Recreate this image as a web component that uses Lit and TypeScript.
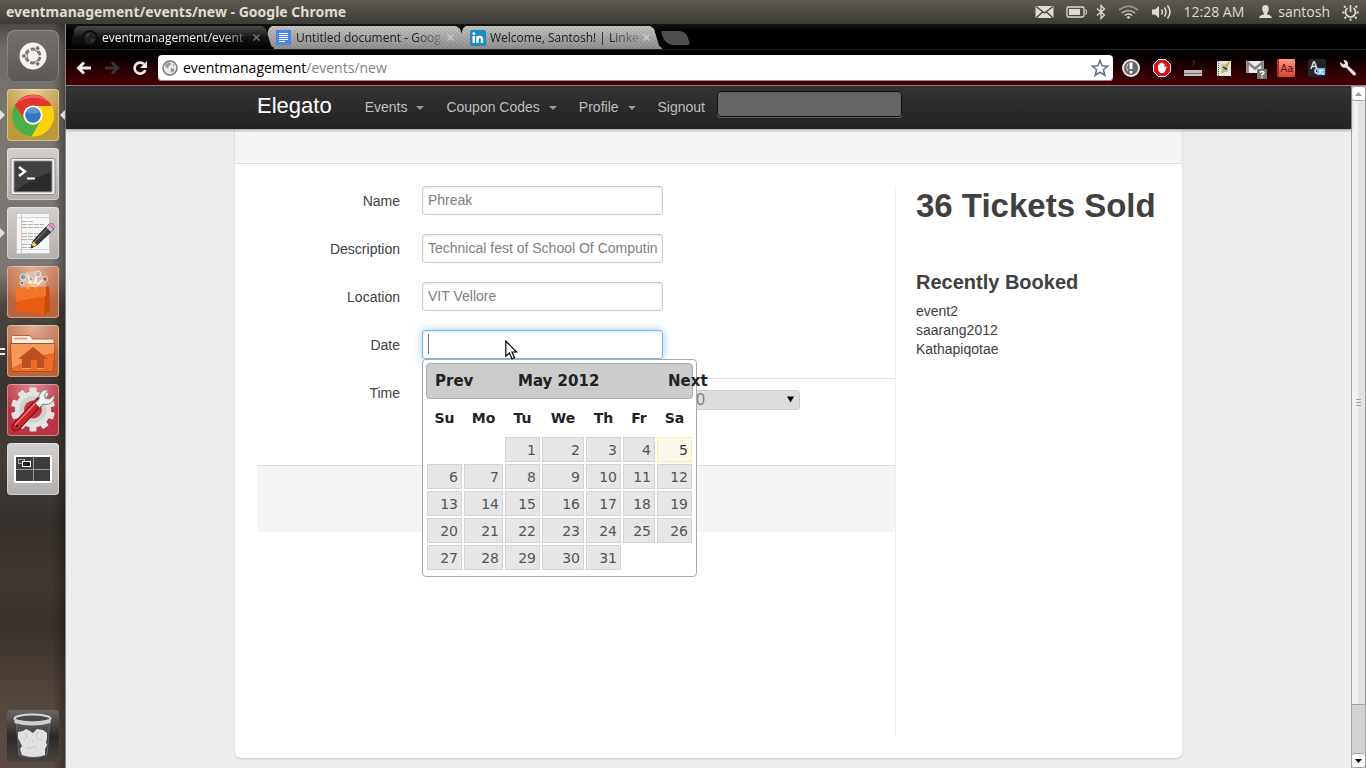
import { LitElement, html, css, svg, nothing } from "lit";
import { customElement } from "lit/decorators.js";
import { classMap } from "lit/directives/class-map.js";

/* ---------- Desktop launcher ---------- */

const ubuntuIcon = svg`
  <circle cx="26" cy="26" r="13.5" fill="#f4f3f2"/>
  <circle cx="26" cy="26" r="7" fill="none" stroke="#7b7672" stroke-width="3" stroke-dasharray="12.7 2" stroke-dashoffset="-1"/>
  <g fill="#7b7672" stroke="#f4f3f2"><circle cx="17" cy="26" r="2.4"/><circle cx="30.6" cy="18.2" r="2.4"/><circle cx="30.6" cy="33.8" r="2.4"/></g>`;

const chromeIcon = svg`
  <circle cx="26" cy="26.500" r="21" fill="#fbd30b"/>
  <path d="M7.800 16A21 21 0 0 0 24.500 47.500L33.500 32A9.500 9.500 0 0 1 17.500 30.500z" fill="#4cb04a"/>
  <path d="M7.800 16.200A21 21 0 0 1 44.700 17L26 17A9.500 9.500 0 0 0 17 30z" fill="#e3342f"/>
  <path d="M10 14A21 21 0 0 1 42 13Q26 4 10 14z" fill="#fff" opacity=".25"/>
  <circle cx="26" cy="26" r="9.500" fill="#fff"/><circle cx="26" cy="26" r="7.800" fill="#3279be"/>
  <path d="M19 23a7.800 7.800 0 0 1 14 0q-7 3-14 0z" fill="#fff" opacity=".22"/>`;

const terminalIcon = svg`
  <rect x="4" y="10.500" width="44" height="36" rx="1.500" fill="#f2f2f2" stroke="#8b8b8b"/>
  <rect x="7" y="13" width="38" height="31" fill="#2b2b2b" stroke="#9a9a9a"/>
  <path d="M8 14h36v10Q24 31 8 43z" fill="#fff" opacity=".1"/>
  <path d="M12 19l6 4.500-6 4.500" fill="none" stroke="#fff" stroke-width="2.400"/>
  <path d="M20 30.500h8" stroke="#fff" stroke-width="2"/>`;

const editorIcon = svg`
  <rect x="9.500" y="6.500" width="33" height="40" fill="#f7f7f5" stroke="#c9c7c5"/>
  <path d="M14.500 7v39" stroke="#e9b5b5"/><path d="M10 10.500h32M10 42.500h32" stroke="#c8d6ea"/>
  <path d="M15 14.500h12M15 17.500h22M15 20.500h20M15 26.500h21M15 29.500h15M15 32.500h17M15 37.500h9M15 40.500h12" stroke="#b4b4b4" stroke-dasharray="5 1"/>
  <path d="M24 41l2-7L42 17l5 5-17 16z" fill="#3c3c3c" stroke="#1d1d1d"/>
  <path d="M27.500 35L43.500 18.500" stroke="#888"/>
  <path d="M24 41l2-7 4 4z" fill="#e8cf6b"/><path d="M24 41l.8-2.800 1.800 1.800z" fill="#111"/>
  <path d="M39 20l2.500-2.500 5 5L44 25z" fill="#c8c8c8"/><path d="M41.500 17.500q2-2 4-.8t2 3.500l-1.500 2z" fill="#e890c5" stroke="#9b5583" stroke-width=".6"/>`;

const bagIcon = svg`
  <circle cx="26" cy="18" r="13" fill="#fff" opacity=".3"/>
  <path d="M26 21L12 11l10 6L19 5l7 12L31 4l-1 13 11-8-9 10z" fill="#fff2dc" opacity=".85"/>
  <g stroke="#fff" stroke-width=".7"><circle cx="16" cy="11" r="3" fill="#7f9db5"/><circle cx="31" cy="8" r="3" fill="#b9bcb9"/><circle cx="38" cy="13" r="2.500" fill="#9c6b5b"/><circle cx="24" cy="13" r="2" fill="#91a7b7"/><circle cx="15" cy="17" r="1.800" fill="#aa5b43"/></g>
  <path d="M9 22l33-1.500 1 24-6 4L10 45z" fill="#e95d12"/><path d="M39 21l3-.5 1 24-6 4z" fill="#c64b0b"/>
  <path d="M9 22l30-1.200V30Q24 32 9.300 36z" fill="#ff8a3d" opacity=".5"/>
  <path d="M21 23v-4.500h8V22.500" fill="none" stroke="#ffb25b" stroke-width="1.600"/>`;

const homeIcon = svg`
  <path d="M4.500 45V11.500q0-1 1-1H22q1 0 1.700 1L25.500 14H47v31z" fill="#f4f2f0" stroke="#b9643a"/>
  <rect x="7" y="12.500" width="13" height="2" fill="#ef9b6f"/>
  <path d="M3.500 18.500h44.500l-1.500 28H4.500z" fill="#ee6c26" stroke="#c24a12"/>
  <path d="M4 19h43.500l-.5 9Q28 30 5 43z" fill="#ffc58c" opacity=".5"/>
  <path d="M26 22L11 34h4v10h9v-9h6v9h7V34h4z" fill="#b9511f"/><path d="M15 43.500h9M30 43.500h7" stroke="#f8a36b"/>`;

const gearTeeth = Array.from({ length: 10 }, (_, i) =>
  svg`<rect x="22.500" y="3.500" width="7" height="9" rx="1" transform="rotate(${i * 36} 26 25.500)"/>`);
const settingsIcon = svg`
  <g fill="#e3e3e1">${gearTeeth}<circle cx="26" cy="25.500" r="18"/></g>
  <circle cx="26" cy="25.500" r="13.500" fill="#d0d0ce"/><circle cx="26" cy="25.500" r="9" fill="#bd3a45"/>
  <path d="M9 43L33 17" stroke="#7d0e12" stroke-width="9" stroke-linecap="round"/>
  <path d="M9 43L31 19" stroke="#cc2229" stroke-width="7" stroke-linecap="round"/>
  <path d="M8.500 40.500L29 18.500" stroke="#f0787a" stroke-width="1.500" stroke-linecap="round"/>
  <path d="M28 19l4.500 4.500 3.500-3.500q6 1.500 9.500-2.500 2.500-3 1.500-6.500L42.500 15l-4-.5-1-4 4-4.500q-4-1-7 1.500-3.500 3.500-2.500 8z" fill="#f0f0ee" stroke="#77837f"/>
  <circle cx="10" cy="42" r="1.200" fill="#5b0a0d"/>`;

const workspaceIcon = svg`
  <rect x="8" y="13" width="36" height="26" rx="1" fill="#3d3d3d" stroke="#fff" stroke-width="2"/>
  <path d="M26.500 14v24M9 26.500h34" stroke="#9b9b9b"/>
  <rect x="11.500" y="16.500" width="6" height="4" fill="none" stroke="#a9a9a9"/>
  <rect x="15.500" y="18.500" width="8" height="5" fill="#222" stroke="#fff"/>`;

const trashIcon = svg`
  <path d="M9 11l3 34q14 5 28 0l3-34z" fill="#777" opacity=".35" stroke="#b8b8b8"/>
  <path d="M11 22l5-1 3-2 4 2 3 2 4-4 6 1 4 3v5l-1 4 1 3-2 4v6q-11 4-23 0l-2-6 2-3-2-4-2-4z" fill="#dfe2de"/>
  <path d="M19 23l1 4-3 3M31 22l-2 5 3 3 3-1M19 37l4 2 4-3 4 4M26 30v3" fill="none" stroke="#c2c6c0"/>
  <ellipse cx="25.500" cy="8.500" rx="18" ry="4" fill="#4a4a48" stroke="#d8d8d6" stroke-width="2"/>
  <path d="M7.500 9q18 6 36 0v4q-18 5-36 0z" fill="#cfcfcc"/>`;

const launcher = [
  { label: "Dash", kind: "dash", icon: ubuntuIcon, run: "" },
  { label: "Chrome", kind: "gold", icon: chromeIcon, run: "active" },
  { label: "Terminal", kind: "silver", icon: terminalIcon, run: "" },
  { label: "Editor", kind: "silver", icon: editorIcon, run: "open" },
  { label: "Software", kind: "rust", icon: bagIcon, run: "" },
  { label: "Home", kind: "rust", icon: homeIcon, run: "two" },
  { label: "Settings", kind: "red", icon: settingsIcon, run: "" },
  { label: "Workspaces", kind: "silver", icon: workspaceIcon, run: "" },
];

@customElement("desk-launcher")
class DeskLauncher extends LitElement {
  static styles = css`
    :host {
      display: flex; flex-direction: column; gap: 7px; width: 66px; box-sizing: border-box;
      padding: 6px 6px 6px 7px; border-right: 1px solid #8c8884;
      background: linear-gradient(90deg, transparent 52px, rgba(20, 14, 10, .4)),
        linear-gradient(#4c4845 0, #6f6a66 22px, #7c7672 90px, #7d7773 250px, #4c4641 280px, #3b3531 360px, #443d38 440px, #352f2b 500px, #40372f 560px, #383029 600px, #55483f 680px, #5a4c44);
    }
    .tile {
      position: relative; width: 52px; height: 52px; padding: 0; border: 0; border-radius: 4px;
      box-shadow: inset 0 0 0 1px rgba(255, 255, 255, .35);
    }
    .tile svg { display: block; }
    .dash { background: linear-gradient(#74706d, #5b5754); box-shadow: inset 0 0 0 1px rgba(255, 255, 255, .2); border-radius: 8px; }
    .gold { background: radial-gradient(circle at 50% 0, #e5cf9e, #bd983f 60%); }
    .silver { background: linear-gradient(#d3d1d0, #b1afae); }
    .rust { background: radial-gradient(circle at 50% 0, #e2b196, #b96540 70%); }
    .red { background: radial-gradient(circle at 50% 0, #dd8a8e, #b83643 60%); }
    .bin { margin-top: auto; background: linear-gradient(#6a6765, #2b2827 50%, #474341); box-shadow: none; }
    .run { position: absolute; top: 21px; left: -7px; width: 5px; height: 10px; background: #e3e1df; clip-path: polygon(0 0, 100% 50%, 0 100%); }
    .now { position: absolute; top: 21px; right: -6px; width: 5px; height: 10px; background: #e3e1df; clip-path: polygon(100% 0, 0 50%, 100% 100%); }
    .two .run { top: 23px; height: 7px; border: solid #f0eeec; border-width: 2px 0; box-sizing: border-box; background: none; clip-path: none; }
  `;
  render() {
    return html`${launcher.map((t) => html`
      <button class=${classMap({ tile: true, [t.kind]: true, two: t.run === "two" })} aria-label=${t.label}>
        <svg width="52" height="52" viewBox="0 0 52 52">${t.icon}</svg>
        ${t.run ? html`<span class="run"></span>` : nothing}
        ${t.run === "active" ? html`<span class="now"></span>` : nothing}
      </button>`)}
      <button class="tile bin" aria-label="Trash"><svg width="52" height="52" viewBox="0 0 52 52">${trashIcon}</svg></button>`;
  }
}

/* ---------- Desktop top panel ---------- */

@customElement("desk-panel")
class DeskPanel extends LitElement {
  static styles = css`
    :host {
      display: flex; align-items: center; justify-content: space-between; height: 24px; padding: 0 7px 0 6px;
      background: linear-gradient(#5c5a50, #3d3b36); color: #dfdbd2;
      font: 14px/24px "Open Sans", "Noto Sans", sans-serif;
    }
    .title { font-weight: 700; font-family: "Noto Sans", "Open Sans", sans-serif; white-space: nowrap; }
    .tray { display: flex; align-items: center; gap: 12px; white-space: nowrap; }
    .tray svg { display: block; }
    .battery { margin-right: -3px; }
    .clock { margin-right: 3px; }
    .user { display: flex; align-items: center; gap: 6px; }
  `;
  render() {
    return html`
      <span class="title">eventmanagement/events/new - Google Chrome</span>
      <div class="tray">
        <svg width="19" height="14" viewBox="0 0 19 14"><rect x=".5" y="1" width="18" height="12" fill="#dfdbd2"/><path d="M1 1.500l8.500 6.500L18 1.500M1 13l6.500-6M18 13l-6.500-6" fill="none" stroke="#45433d" stroke-width="1.300"/></svg>
        <svg class="battery" width="21" height="12" viewBox="0 0 21 12"><rect x="1" y="1" width="17" height="10" rx="1.500" fill="none" stroke="#dfdbd2" stroke-width="1.300"/><rect x="3" y="3" width="11" height="6" fill="#dfdbd2"/><path d="M19 4h1.300v4H19" fill="none" stroke="#dfdbd2"/></svg>
        <svg width="10" height="16" viewBox="0 0 10 16"><path d="M1 4.500l7.500 6.500L5 14.500v-13L8.500 5 1 11.500" fill="none" stroke="#dfdbd2" stroke-width="1.300"/></svg>
        <svg width="21" height="14" viewBox="0 0 21 14"><g fill="none" stroke="#dfdbd2" stroke-width="1.600"><path d="M1 5q9.500-7.500 19 0" opacity=".5"/><path d="M4 8q6.500-5 13 0" opacity=".75"/><path d="M6.800 10.500q3.700-3 7.400 0"/></g><path d="M8.500 12q2-1.500 4 0l-2 2z" fill="#dfdbd2"/></svg>
        <svg width="21" height="16" viewBox="0 0 21 16"><path d="M1 5.500h3l4-3.500v12l-4-3.500H1z" fill="#dfdbd2"/><path d="M10.500 5.500q1.800 2.500 0 5M13.500 3.500q3 4.500 0 9M16.500 1.500q5 6.500 0 13" fill="none" stroke="#dfdbd2" stroke-width="1.500"/></svg>
        <span class="clock">12:28 AM</span>
        <span class="user">
          <svg width="13" height="14" viewBox="0 0 13 14"><path d="M6.500 0q3.300 0 3.300 4 0 2.500-1.600 4.200v1.300q4.800 1 4.800 3.500H0q0-2.500 4.800-3.500V8.200Q3.200 6.500 3.200 4q0-4 3.300-4z" fill="#dfdbd2"/></svg>
          <span>santosh</span>
        </span>
        <svg width="17" height="17" viewBox="0 0 17 17"><g fill="none" stroke="#dfdbd2"><path d="M5.500 4a5 5 0 1 0 6 0" stroke-width="1.700"/><path d="M8.500 1v7" stroke-width="1.700"/><path d="M3.500 3.500L2 2M13.500 3.500L15 2M2.500 8.500H.3M14.500 8.500h2.200M4 13l-1.500 1.500M13 13l1.500 1.500M8.500 14.500v2.200" stroke-width="1.800"/></g></svg>
      </div>`;
  }
}

/* ---------- Browser tabs and toolbar ---------- */

const globe = (dark: boolean) => svg`
  <circle cx="8" cy="8" r="7" fill=${dark ? "#1d1d1d" : "#e9e9e9"} stroke=${dark ? "#080808" : "#747474"} stroke-width="1.400"/>
  <path d="M3 5q2-3 5-2.500l1 2-2 1.500-1 2L4 7.500zM9 8l3 .5.500 2L10 13l-1.500-2zM11 3.500l2 2-1.500 1z" fill=${dark ? "#333" : "#9a9a9a"}/>`;

const tabs = [
  { text: "eventmanagement/event", active: true, icon: globe(true) },
  { text: "Untitled document - Goog", active: false,
    icon: svg`<rect width="15" height="15" fill="#4a86e8"/><path d="M3 3.500h9M3 5.500h9M3 7.500h9M3 9.500h9M3 11.500h6" stroke="#fff"/>` },
  { text: "Welcome, Santosh! | Linke", active: false,
    icon: svg`<rect width="16" height="16" rx="2" fill="#1a8dc2"/><rect x="2.500" y="6" width="2.500" height="7" fill="#fff"/><circle cx="3.800" cy="3.700" r="1.400" fill="#fff"/><path d="M7.500 13V6M7.500 9.500q0-2.500 2.500-2.500 2 0 2 2.500V13" fill="none" stroke="#fff" stroke-width="2.400"/>` },
];

const extensions = [
  { label: "Notifier", art: svg`<circle cx="9" cy="9" r="8" fill="#686868" stroke="#e6e6e6" stroke-width="2"/><path d="M9 3.500V10" stroke="#fff" stroke-width="3"/><circle cx="9" cy="13" r="1.500" fill="#fff"/><path d="M6 4.500q-3 4 0 8" fill="none" stroke="#ddd"/>` },
  { label: "AdBlock", art: svg`<path d="M5.500.5h7l5 5v7l-5 5h-7l-5-5v-7z" fill="#dc1212" stroke="#fff"/><path d="M5 9V6q.8-1 1.500 0V4.500q.9-1 1.700 0V4q.9-1 1.700 0v1q.9-1 1.600 0v4l1-1.500q1-.5 1.200.5L12 12.500 10.500 14h-3L5.500 12z" fill="#fff"/>` },
  { label: "Page rank", art: svg`<path d="M7.500 2.500q1.500-1.500 3 0 .5 1.500-1.500 2.500V6M9 7.500V8" fill="none" stroke="#3d3030"/><rect y="11" width="18" height="3.500" fill="#bdbdbd"/><path d="M0 16h18" stroke="#fff" stroke-width="1.500"/>` },
  { label: "Notes", art: svg`<rect x="2" y="2" width="14" height="15" fill="#e4e4dc"/><path d="M3.500 2v15" stroke="#555" stroke-dasharray="1 1"/><rect x="6" y="5" width="7" height="8" fill="#b9cbbd"/><path d="M7 14l3-4 4-7" stroke="#e9a21e" stroke-width="2" fill="none"/><path d="M8 8l4 2.500" stroke="#1d4a7a" stroke-width="2"/>` },
  { label: "Mail checker", art: svg`<rect x="0" y="2" width="18" height="12" fill="#ececec"/><path d="M1.500 14V3.500L9 9.500l7.500-6V14" fill="none" stroke="#858585" stroke-width="2.600"/><rect x="11" y="10" width="10" height="10" rx="1" fill="#777"/><path d="M14 13.500q2-2 4 0 0 1.500-2 2v1M16 17.500v1.200" fill="none" stroke="#fff" stroke-width="1.400"/>` },
  { label: "Dictionary", art: null },
  { label: "Translate", art: svg`<rect width="18" height="18" rx="3" fill="#20262b"/><path d="M3 10l2.500-7h1L9 10M4 7.500h4M10 9.500q-3 0-3 2.500t3 2.500" fill="none" stroke="#ddd" stroke-width="1.500"/><rect x="9" y="9" width="8" height="7" fill="#7db7f1"/><path d="M10.500 11.500h5M13 10v1.500q0 2.500-2.500 3.500M12 12.500q1.200 2 3.500 2.500" fill="none" stroke="#fff"/>` },
  { label: "Wrench", art: svg`<path d="M1 3l3.500 2.500L6 4.500 4.500 1Q8 .8 9 4q.3 1.500-.3 2.500l7.800 7q1 1.500 0 2.500t-2.500 0l-7-7.500q-1.500.5-3 0Q.8 6.500 1 3z" fill="#e9e7e6"/>` },
];

@customElement("browser-bar")
class BrowserBar extends LitElement {
  static styles = css`
    :host {
      display: block; border-bottom: 1px solid #8f8585; color: #eee;
      background: linear-gradient(#141414, #000 8px, #000 30px, #1a0000 40px, #4a0006);
      font: 12px/24px "Open Sans", "Noto Sans", sans-serif;
    }
    button { border: 0; padding: 0; background: none; color: inherit; font: inherit; }
    svg { display: block; flex: none; overflow: visible; }
    .tabs { display: flex; align-items: flex-end; height: 26px; padding-top: 2px; border-bottom: 1px solid #262626; box-sizing: border-box; }
    .tab {
      position: relative; display: flex; align-items: center; gap: 4px; width: 208px; height: 23px; box-sizing: border-box;
      margin-right: -14px; padding: 0 14px 0 16px;
      clip-path: polygon(0 100%, 4px 80%, 9px 10%, 12px 0, 196px 0, 200px 12%, 205px 85%, 209px 100%);
      background: repeating-conic-gradient(rgba(0, 0, 0, .06) 0 25%, transparent 0 50%) 0 0 / 4px 4px, linear-gradient(#c4c4c2, #8f8f8d);
      color: #1c1c1c;
    }
    .tab:nth-child(1) { z-index: 3; }
    .tab:nth-child(2) { z-index: 2; }
    .tab:nth-child(3) { z-index: 1; }
    .tab.active { background: linear-gradient(#4a4a4a, #151515 50%, #000); color: #f2f2f2; }
    .name { flex: 1; white-space: nowrap; text-align: left; mask-image: linear-gradient(90deg, #000 80%, rgba(0, 0, 0, .2)); }
    .plus { width: 25px; height: 14px; margin: 0 0 4px 15px; background: #4e4e4e; border-radius: 2px 6px 3px 8px; transform: skewX(18deg); }
    .tools { display: flex; align-items: center; gap: 14px; height: 35px; padding: 0 9px 0 10px; }
    .nav { display: flex; gap: 12px; }
    .omni { flex: 1; display: flex; align-items: center; gap: 5px; height: 26px; margin-left: -4px; padding: 0 4px; box-sizing: border-box; border-radius: 4px; background: #fff; box-shadow: inset 0 -1px #9b8a8a; }
    .url { flex: 1; min-width: 0; font-size: 14px; color: #000; white-space: nowrap; outline: 0; }
    .path { color: #808080; }
    .exts { display: flex; gap: 13px; margin-left: -5px; }
    .aa { width: 18px; height: 18px; box-sizing: border-box; border-left: 2px solid #b5281c; border-radius: 1px; background: linear-gradient(#ff9a86, #d8402f); font: 10px/20px "DejaVu Sans", sans-serif; color: #531008; }
  `;
  render() {
    return html`
      <div class="tabs">
        ${tabs.map((t) => html`
          <button class=${classMap({ tab: true, active: t.active })}>
            <svg width="16" height="16" viewBox="0 0 16 16">${t.icon}</svg>
            <span class="name">${t.text}</span>
            <svg width="7" height="7" viewBox="0 0 7 7"><path d="M.5.5l6 6M6.500.5l-6 6" stroke=${t.active ? "#777" : "#ccc"} stroke-width="1.400"/></svg>
          </button>`)}
        <button class="plus" aria-label="New tab"></button>
      </div>
      <div class="tools">
        <div class="nav">
          <button aria-label="Back"><svg width="16" height="16" viewBox="0 0 16 16"><path d="M15 8H3M8 2.500L2.500 8 8 13.500" fill="none" stroke="#eee" stroke-width="3"/></svg></button>
          <button aria-label="Forward"><svg width="16" height="16" viewBox="0 0 16 16"><path d="M1 8h12M8 2.500L13.500 8 8 13.500" fill="none" stroke="#3b3333" stroke-width="3"/></svg></button>
          <button aria-label="Reload"><svg width="16" height="16" viewBox="0 0 16 16"><path d="M12 4.200A5.500 5.500 0 1 0 13.300 10" fill="none" stroke="#eee" stroke-width="2.600"/><path d="M15 1v7H8z" fill="#eee"/></svg></button>
        </div>
        <div class="omni">
          <svg width="16" height="16" viewBox="0 0 16 16">${globe(false)}</svg>
          <div class="url" role="textbox" contenteditable="true" aria-label="Address">eventmanagement<span class="path">/events/new</span></div>
          <button aria-label="Bookmark"><svg width="18" height="18" viewBox="0 0 18 18"><path d="M9 1.500l2.100 5.200 5.600.4-4.300 3.600 1.400 5.500L9 13.200l-4.800 3 1.400-5.500L1.300 7.100l5.600-.4z" fill="#fff" stroke="#65718c" stroke-width="1.600"/></svg></button>
        </div>
        <div class="exts">
          ${extensions.map((e) => html`<button aria-label=${e.label}>${e.art
            ? html`<svg width="18" height="18" viewBox="0 0 18 18">${e.art}</svg>`
            : html`<div class="aa">Aa</div>`}</button>`)}
        </div>
      </div>`;
  }
}

/* ---------- Site navigation ---------- */

@customElement("site-nav")
class SiteNav extends LitElement {
  static styles = css`
    :host { display: block; position: relative; z-index: 1; background: linear-gradient(#333, #222); box-shadow: 0 1px 3px rgba(0, 0, 0, .4); font: 14px/43px "Liberation Sans", Arial, sans-serif; }
    .bar { display: flex; align-items: center; height: 43px; max-width: 947px; margin: 0 auto; padding-left: 22px; box-sizing: border-box; }
    a { color: #bfbfbf; text-decoration: none; white-space: nowrap; }
    .brand { margin-right: 33px; padding-bottom: 3px; font-size: 22px; line-height: 40px; color: #fff; }
    .item { display: flex; align-items: center; gap: 9px; margin-right: 22px; }
    .caret { border: 4px solid transparent; border-top-color: #999; border-bottom: 0; }
    .out { margin-right: 12px; }
    .find { width: 185px; height: 26px; margin-bottom: 8px; box-sizing: border-box; border: 1px solid #111; border-radius: 4px; background: #666; box-shadow: inset 0 1px 2px rgba(0, 0, 0, .1), 0 1px rgba(255, 255, 255, .25); color: #fff; }
  `;
  render() {
    return html`<nav class="bar">
      <a class="brand" href="#">Elegato</a>
      ${["Events", "Coupon Codes", "Profile"].map((n) => html`<a class="item" href="#">${n}<span class="caret"></span></a>`)}
      <a class="out" href="#">Signout</a>
      <input class="find" type="text" aria-label="Search">
    </nav>`;
  }
}

/* ---------- Calendar ---------- */

const DAYS = ["Su", "Mo", "Tu", "We", "Th", "Fr", "Sa"];
const COLS = [37, 41, 37, 44, 37, 34, 37];
const FIRST_WEEKDAY = 2;
const LAST_DAY = 31;
const TODAY = 5;

@customElement("date-picker")
class DatePicker extends LitElement {
  static styles = css`
    :host { display: block; box-sizing: border-box; width: 275px; padding: 3px 3px 5px; border: 1px solid #aaa; border-radius: 4px; background: #fff; color: #222; font: 14px/19px "DejaVu Sans", Verdana, sans-serif; }
    .head { display: flex; align-items: center; height: 36px; box-sizing: border-box; padding-left: 8px; border: 1px solid #aaa; border-radius: 4px; background: #ccc; font-size: 15px; font-weight: 700; white-space: nowrap; }
    .head button { border: 0; padding: 0; background: none; color: inherit; font: inherit; text-align: left; }
    .prev { flex: 0 0 83px; }
    .title { flex: 0 0 150px; }
    .next { flex: 0 0 41px; }
    table { border-spacing: 0; table-layout: fixed; width: 267px; }
    th { height: 37px; box-sizing: border-box; padding: 2px 0 0; font-weight: 700; }
    td { padding: 1px; }
    .day { display: block; width: 100%; height: 25px; box-sizing: border-box; padding: 2px 3px 0; border: 1px solid #d3d3d3; background: #e6e6e6; color: #555; font: inherit; text-align: right; }
    .today { border-color: #fcefa1; background: #fbf9ee; color: #363636; }
  `;
  render() {
    const weeks = Array.from({ length: 5 }, (_, w) => DAYS.map((_d, d) => w * 7 + d - FIRST_WEEKDAY + 1));
    return html`
      <div class="head">
        <button class="prev">Prev</button><span class="title">May 2012</span><button class="next">Next</button>
      </div>
      <table>
        <colgroup>${COLS.map((w) => html`<col width=${w}>`)}</colgroup>
        <thead><tr>${DAYS.map((d) => html`<th scope="col">${d}</th>`)}</tr></thead>
        <tbody>${weeks.map((week) => html`<tr>${week.map((n) => html`<td>${n > 0 && n <= LAST_DAY
          ? html`<button class=${classMap({ day: true, today: n === TODAY })}>${n}</button>`
          : nothing}</td>`)}</tr>`)}</tbody>
      </table>`;
  }
}

/* ---------- Event page ---------- */

@customElement("event-page")
class EventPage extends LitElement {
  static styles = css`
    :host { flex: 1; display: flex; flex-direction: column; min-height: 0; color: #404040; font: 14px/19px "Liberation Sans", Arial, sans-serif; }
    .card { flex: 1; display: flex; flex-direction: column; width: 100%; max-width: 947px; margin: 0 auto 10px; background: #fff; border-radius: 0 0 6px 6px; box-shadow: 0 1px 2px rgba(0, 0, 0, .15); }
    .strip { height: 35px; box-sizing: border-box; background: #f5f5f5; border-bottom: 1px solid #ddd; }
    .body { flex: 1; display: flex; padding: 22px; }
    .main { flex: 1; border-right: 1px solid #eee; }
    .row { display: flex; gap: 22px; height: 29px; margin-bottom: 19px; }
    .row > label { width: 143px; padding-top: 5px; line-height: 20px; text-align: right; }
    .field { position: relative; }
    .box { display: block; width: 241px; height: 29px; box-sizing: border-box; padding: 4px 4px 5px 5px; border: 1px solid #ccc; border-radius: 3px; background: #fff; box-shadow: inset 0 1px 3px rgba(0, 0, 0, .1); color: #808080; font: 14px/18px "Liberation Sans", Arial, sans-serif; outline: 0; }
    .focus { border-color: #73b8f0; box-shadow: inset 0 1px 3px rgba(0, 0, 0, .1), 0 0 8px rgba(82, 168, 236, .6); }
    .caret { position: absolute; left: 6px; top: 4px; width: 1px; height: 20px; background: #777; }
    .pop { position: absolute; left: 0; top: 29px; z-index: 2; }
    .pointer { position: absolute; left: 83px; top: 10px; z-index: 3; }
    .time { flex: 1; height: 29px; padding: 11px 95px 0 0; border-top: 1px solid #ddd; }
    .pick { position: relative; }
    .mins { display: block; width: 118px; height: 20px; margin-left: auto; padding: 0 4px; box-sizing: border-box; appearance: none; border: 1px solid #ccc; border-radius: 3px; background: #ddd; color: #808080; font: 16px/18px "Liberation Sans", Arial, sans-serif; }
    .pick svg { position: absolute; right: 6px; top: 6px; }
    .actions { height: 67px; margin-top: 58px; box-sizing: border-box; background: #f5f5f5; border-top: 1px solid #ddd; border-radius: 0 0 3px 3px; }
    .side { width: 264px; padding-left: 20px; box-sizing: border-box; }
    h1 { margin: 0 0 38px; font-size: 33px; line-height: 40px; white-space: nowrap; }
    h2 { margin: 0; font-size: 20px; line-height: 37px; }
    ul { margin: 0; padding: 1px 0 0; list-style: none; }
  `;
  render() {
    const rows = [
      ["name", "Name", "Phreak"],
      ["desc", "Description", "Technical fest of School Of Computing"],
      ["place", "Location", "VIT Vellore"],
    ];
    return html`<section class="card">
      <div class="strip"></div>
      <div class="body">
        <form class="main">
          ${rows.map(([id, label, value]) => html`<div class="row"><label for=${id}>${label}</label><input class="box" id=${id} type="text" .value=${value}></div>`)}
          <div class="row">
            <label for="date">Date</label>
            <div class="field">
              <input class="box focus" id="date" type="text">
              <span class="caret"></span>
              <date-picker class="pop"></date-picker>
              <svg class="pointer" width="13" height="20" viewBox="0 0 13 20"><path d="M.8 1v15.200l3.600-3.200 2.500 5.800 2.600-1.100-2.500-5.700h4.600z" fill="#fff" stroke="#000" stroke-width="1.200"/></svg>
            </div>
          </div>
          <div class="row">
            <label for="mins">Time</label>
            <div class="time"><div class="pick">
              <select class="mins" id="mins"><option>00</option></select>
              <svg width="7" height="7" viewBox="0 0 7 7"><path d="M0 .5h7l-3.500 6z" fill="#000"/></svg>
            </div></div>
          </div>
          <div class="actions"></div>
        </form>
        <aside class="side">
          <h1>36 Tickets Sold</h1>
          <h2>Recently Booked</h2>
          <ul><li>event2</li><li>saarang2012</li><li>Kathapiqotae</li></ul>
        </aside>
      </div>
    </section>`;
  }
}

/* ---------- Whole screen ---------- */

@customElement("app-root")
class AppRoot extends LitElement {
  static styles = css`
    :host { display: flex; flex-direction: column; height: 100vh; overflow: hidden; }
    .desk { flex: 1; display: flex; min-height: 0; }
    .window { flex: 1; display: flex; flex-direction: column; min-width: 0; }
    .view { flex: 1; display: flex; min-height: 0; }
    .page { flex: 1; display: flex; flex-direction: column; min-width: 0; background: #eee; }
    .scroll { display: flex; flex-direction: column; width: 15px; box-sizing: border-box; border: solid #a0a0a0; border-width: 0 1px; background: #d3d3d3; }
    .end { display: grid; place-items: center; height: 15px; box-sizing: border-box; background: #fff; border: solid #a0a0a0; border-width: 1px 0; border-radius: 3px; }
    .thumb { flex: 603; display: grid; place-items: center; background: linear-gradient(90deg, #f1f1f1 50%, #e3e3e3 0); border-bottom: 1px solid #a0a0a0; }
    .track { flex: 48; }
  `;
  render() {
    return html`
      <desk-panel></desk-panel>
      <div class="desk">
        <desk-launcher></desk-launcher>
        <div class="window">
          <browser-bar></browser-bar>
          <div class="view">
            <div class="page"><site-nav></site-nav><event-page></event-page></div>
            <div class="scroll">
              <div class="end"><svg width="7" height="4" viewBox="0 0 7 4"><path d="M0 4h7L3.500 0z" fill="#999"/></svg></div>
              <div class="thumb"><svg width="5" height="7" viewBox="0 0 5 7"><path d="M0 .5h5M0 3.500h5M0 6.500h5" stroke="#a0a0a0"/></svg></div>
              <div class="track"></div>
              <div class="end"><svg width="7" height="4" viewBox="0 0 7 4"><path d="M0 0h7L3.500 4z" fill="#000"/></svg></div>
            </div>
          </div>
        </div>
      </div>`;
  }
}
